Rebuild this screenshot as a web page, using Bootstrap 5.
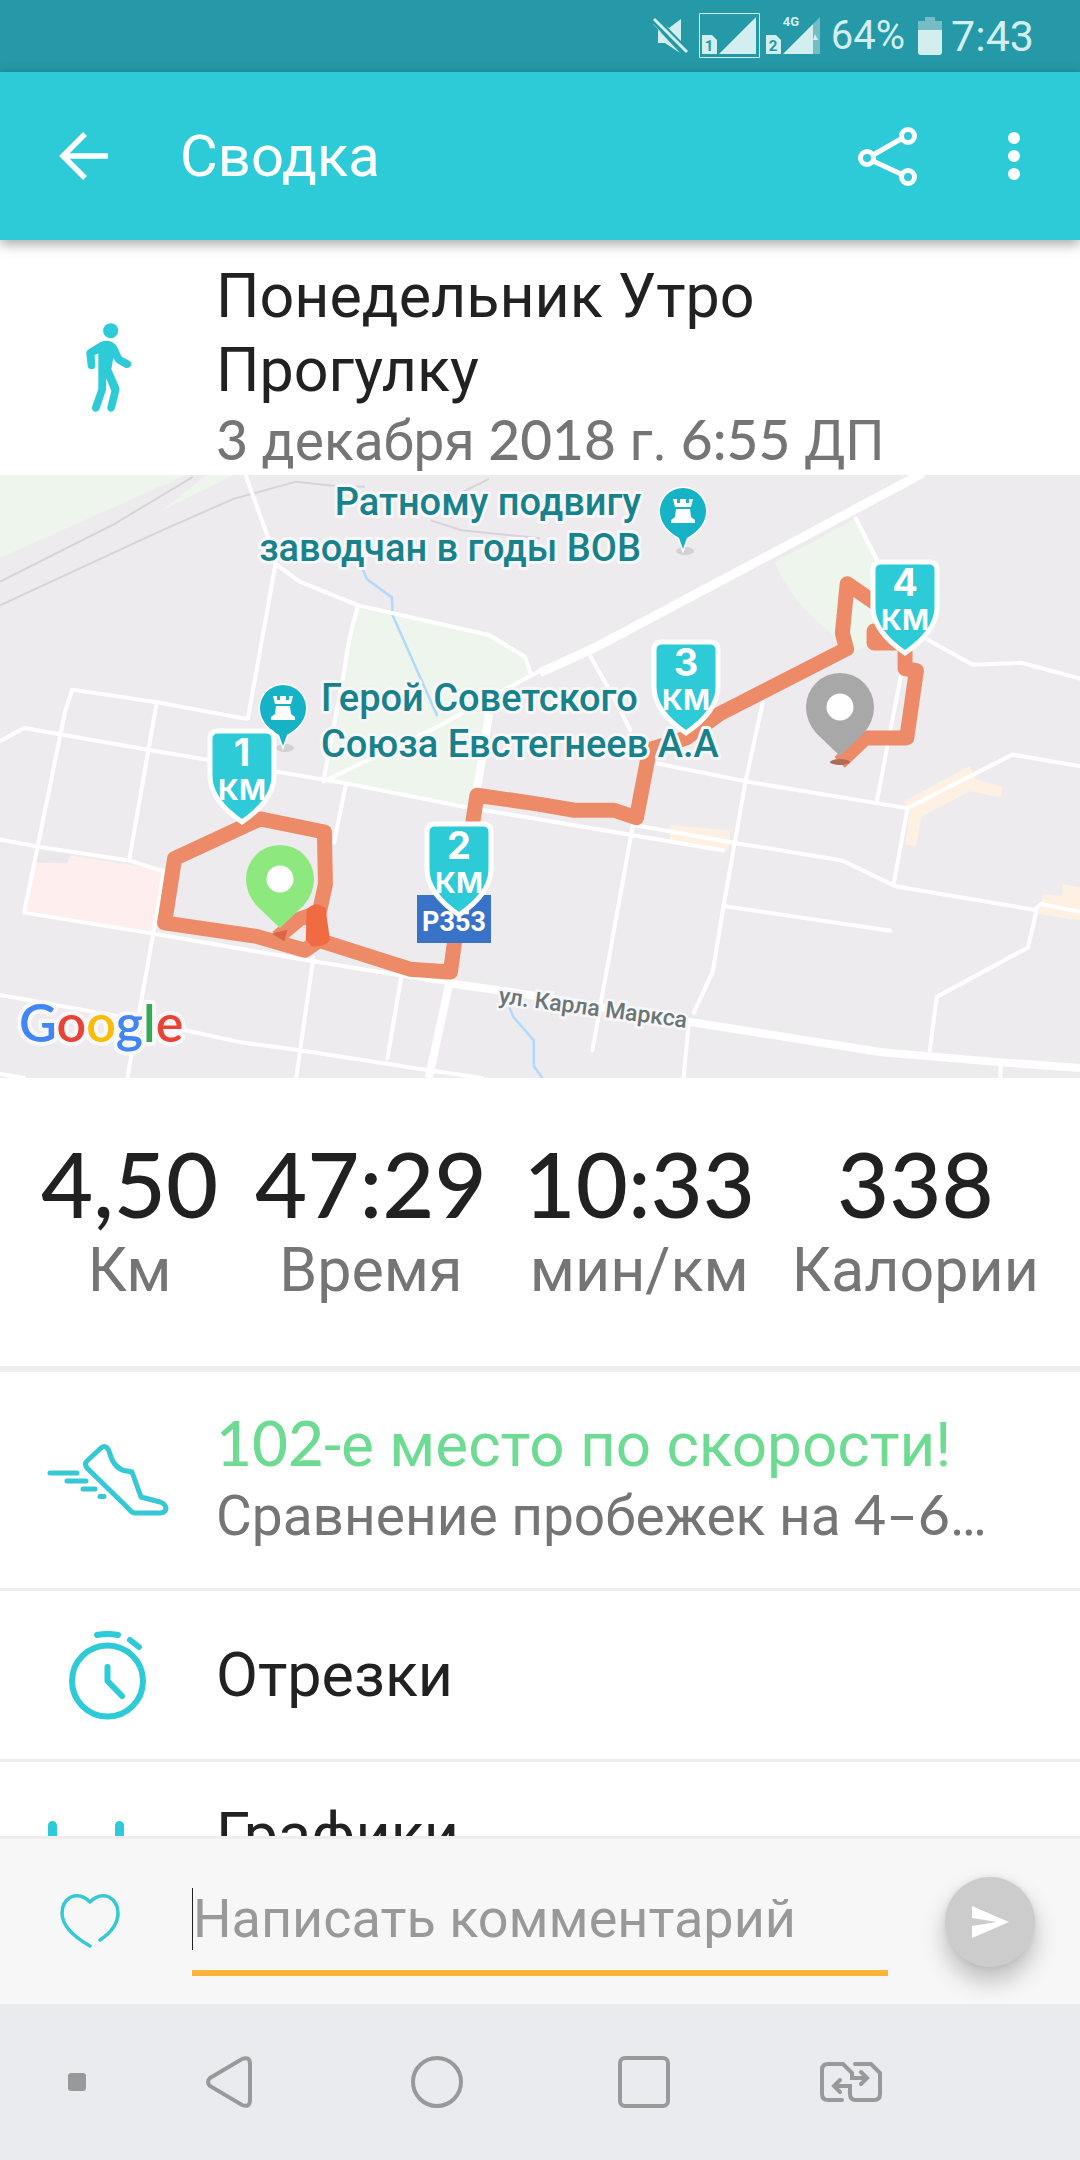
<!DOCTYPE html>
<html lang="ru">
<head>
<meta charset="utf-8">
<meta name="viewport" content="width=device-width, initial-scale=1">
<title>Сводка</title>
<link href="https://cdn.jsdelivr.net/npm/bootstrap@5.3.0/dist/css/bootstrap.min.css" rel="stylesheet">
<script src="https://cdn.jsdelivr.net/npm/bootstrap@5.3.0/dist/js/bootstrap.bundle.min.js"></script>
<style>
  :root { --teal: #2dcad7; --rule: #eeeeee; }
  body { font-family: Roboto, "Liberation Sans", sans-serif; color: #212121; background: #fff; }
  svg { display: block; flex: none; }
  button { border: 0; background: none; padding: 0; }
  .num { font-family: Lato, Roboto, sans-serif; font-weight: 500; line-height: 1; }

  .status-strip { background: #2599a7; color: #d3eeee; height: 72px; padding-right: 46px; flex: none; }
  .battery-pct { font-size: 40px; line-height: 48px; margin-left: 10px; }
  .clock-text { font-size: 43px; line-height: 48px; margin-left: 9px; }
  .battery-icon { margin-left: 13px; }

  .app-bar { background: var(--teal); color: #fff; height: 168px; padding: 0 55px 0 56px; flex: none;
             box-shadow: 0 4px 12px rgba(0,0,0,.35); z-index: 2; }
  .app-bar h1 { font-size: 58px; line-height: 72px; font-weight: 400; margin-left: 69px; }
  .app-bar .menu-btn { margin-left: 85px; }

  .icon-col { width: 216px; flex: none; }
  .line-lg { font-size: 61px; line-height: 74px; font-weight: 400; margin: 0; }
  .line-md { font-size: 55px; line-height: 68px; color: #757575; margin: 0; }
  .trip-head { padding-top: 19px; }
  .trip-head .line-lg { padding-right: 240px; }
  .trip-map { background: #edebee; }
  .trip-map svg { width: 100%; height: auto; }
  .poi { font: 500 38px Roboto, sans-serif; fill: #18828c; stroke: #f7f6f8; stroke-width: 6px; paint-order: stroke; stroke-linejoin: round; }
  .flag-text { font-family: Inter, Roboto, sans-serif; fill: #fff; text-anchor: middle; }
  .road path { vector-effect: non-scaling-stroke; }

  .totals { padding: 55px 41px 59px; border-bottom: 6px solid var(--rule); }
  .total-value { font-size: 90px; line-height: 100px; }
  .total-label { font-size: 61px; line-height: 74px; color: #757575; }

  .detail-row { border-bottom: 3px solid var(--rule); color: inherit; text-decoration: none; }
  .row-tall { padding: 36px 0 38px; }
  .row-short { padding: 47px 0; }
  .good { color: #6ddb92; font-size: 62px; }

  .comment-bar { background: #f7f7f7; border-top: 3px solid var(--rule); height: 168px; padding: 0 45px 0 60px; flex: none; }
  .comment-bar input { min-width: 0; height: 109px; margin: 0 57px 0 72px; padding: 0 0 0 1px; border: 0;
    border-bottom: 6px solid #fdb539; border-radius: 0; outline: 0; font-size: 54px; color: #212121; caret-color: transparent;
    background: linear-gradient(#212121,#212121) left center / 1px 62px no-repeat; }
  .comment-bar input::placeholder { color: #999; opacity: 1; }
  .send-btn { width: 90px; height: 90px; background: #ccc; box-shadow: 0 14px 24px rgba(0,0,0,.24), 0 0 6px rgba(0,0,0,.08); flex: none; }

  .sys-nav { background: #e9ebee; height: 156px; flex: none; }
  .sys-nav .slot { flex: 207 1 0; }
  .sys-nav .slot-dot { flex: 98 1 0; }
  .sys-nav .slot-lead { flex: 28 1 0; }
  .sys-nav .slot-end { flex: 126 1 0; }
</style>
</head>
<body class="d-flex flex-column vh-100 overflow-hidden">

<div class="status-strip d-flex align-items-center justify-content-end">
  <svg width="168" height="48" viewBox="656 12 168 48" aria-hidden="true">
    <path d="M661 30V43H668L683 53 656 24V18L672 28 684 19V44Z" fill="#d3eeee"/>
    <path d="M655 17L692 55" stroke="#2599a7" stroke-width="8"/>
    <path d="M657 19L690 52" stroke="#d3eeee" stroke-width="3"/>
    <path d="M702.500 13.500H762.500V57.500H702.500Z" fill="none" stroke="#d3eeee"/>
    <path d="M705 35H715L720 40V54H705ZM722 54L759 17V54ZM769 35H779L784 40V54H769ZM786 54L816 24V54Z" fill="#d3eeee"/>
    <path d="M816 24L823 17V54H816Z" fill="#75bcc5"/><path d="M816 40l2-6 3 6z" fill="#d3eeee"/>
    <text x="712" y="51" font-size="15" font-weight="700" text-anchor="middle" fill="#2599a7">1</text>
    <text x="776" y="51" font-size="15" font-weight="700" text-anchor="middle" fill="#2599a7">2</text>
    <text x="794" y="26" font-size="13" font-weight="700" text-anchor="middle" fill="#d3eeee">4G</text>
  </svg>
  <span class="battery-pct">64%</span>
  <svg class="battery-icon" width="24" height="38" aria-hidden="true"><path d="M7 0H17V4H24V14H0V4H7Z" fill="#75bcc5"/><path d="M0 13H24V35Q24 38 21 38H3Q0 38 0 35Z" fill="#d3eeee"/></svg>
  <span class="clock-text">7:43</span>
</div>

<header class="app-bar position-relative d-flex align-items-center">
  <button type="button" aria-label="Назад"><svg width="55" height="56" viewBox="56 128 55 56"><path d="M108 156H65M85 134L63 156 85 178" fill="none" stroke="#fff" stroke-width="5.500"/></svg></button>
  <h1 class="mb-0">Сводка</h1>
  <button type="button" class="ms-auto" aria-label="Поделиться"><svg width="60" height="64" viewBox="858 124 60 64"><g fill="none" stroke="#fff" stroke-width="5"><path d="M873 155L901 139M873 161L901 174"/><circle cx="908" cy="136" r="6.500"/><circle cx="867" cy="158" r="6.500"/><circle cx="908" cy="177" r="6.500"/></g></svg></button>
  <button type="button" class="menu-btn" aria-label="Ещё"><svg width="22" height="56" viewBox="1003 128 22 56"><g fill="#fff"><circle cx="1014" cy="138" r="6"/><circle cx="1014" cy="156" r="6"/><circle cx="1014" cy="174" r="6"/></g></svg></button>
</header>

<main class="flex-grow-1 overflow-hidden" style="min-height:0">
  <section class="trip-head d-flex align-items-center">
    <div class="icon-col d-flex justify-content-center">
      <svg width="120" height="120" viewBox="-4 -6 360 360" aria-hidden="true">
        <circle cx="184" cy="65" r="22.500" fill="#2dcad7"/>
        <path d="M147 133L136 139 138 170Q137 180 127 181 117 181 115 172L111 133Q111 126 118 121L154 99Q174 90 192 101 201 106 206 119L217 143 240 155Q248 161 245 170 240 179 229 177L204 163Q196 157 192 146L186 181 210 236Q212 243 209 249L197 298Q193 309 183 308 173 305 174 295L186 246 171 208 170 243 151 299Q147 309 137 308 127 305 128 294L147 240V180Z" fill="#2dcad7"/>
      </svg>
    </div>
    <div class="flex-grow-1">
      <h2 class="line-lg">Понедельник Утро Прогулку</h2>
      <p class="line-md"><span class="num">3</span> декабря <span class="num">2018</span> г. <span class="num">6:55</span> ДП</p>
    </div>
  </section>

  <section class="trip-map" aria-label="Карта маршрута">
    <svg viewBox="0 476 1080 603" role="img" aria-label="Маршрут прогулки">
      <defs>
        <g id="flag"><path d="M-24 3H24Q32 3 32 11V48Q32 72 0 94Q-32 72 -32 48V11Q-32 3 -24 3Z" fill="#2dcad7" stroke="#fff" stroke-width="5"/></g>
        <g id="rook">
          <ellipse cx="2" cy="40" rx="9" ry="4" fill="#d3d1d5"/>
          <path d="M0 38L-4 27Q-23 16 -23 0A23 23 0 0 1 23 0Q23 16 4 27Z" fill="#16b2c6" stroke="#fff" stroke-width="3" paint-order="stroke"/>
          <path d="M-10 -12H-6V-8H-3V-12H3V-8H6V-12H10L8 -4H-8ZM-7 -2H7L8 6 12 9V12H-12V9L-8 6Z" fill="#fff"/>
        </g>
        <g id="drop"><path d="M0 83L-24 60Q-34 48 -34 34A34 34 0 0 1 34 34Q34 48 24 60Z"/><circle cy="34" r="13.500" fill="#fff"/></g>
      </defs>
      <g class="road" transform="translate(0 470) scale(.34439 .39541)">
        <path fill="#edf5ed" d="M0 15H540L0 225ZM600 15L680 15 470 105ZM1035 350L1420 420 1525 475 1540 515 1405 640 1370 855 940 790 1000 510ZM2250 235L2485 125 2560 240 2620 420 2480 460Q2290 340 2250 235Z"/>
        <path fill="#ffeeee" d="M110 965L475 1015 450 1170 70 1122Z"/><path fill="#eae7ea" d="M110 965L205 975 195 998 105 995Z"/>
        <g fill="#fef1e3"><path d="M2625 840L2815 752 2835 785 2912 805 2905 830 2815 815 2675 880 2660 955 2630 950 2640 865ZM1945 900L2120 915 2115 965 1945 945ZM3030 1075L3085 1080V1050L3136 1058V1142L3015 1125Z"/></g>
        <g fill="none" stroke="#d5d4da" stroke-width="2"><path d="M0 285L330 140 560 20M0 345L470 155 680 75 860 32 960 42 1060 45M1250 130L1340 155 1568 175M1340 60L1420 25"/></g>
        <g fill="none" stroke="#b0dafb" stroke-width="2.500"><path d="M1040 225L1065 278 1138 325 1140 370 1270 625M1470 1340L1490 1385 1550 1445V1510L1575 1540"/></g>
        <g fill="none" stroke="#fff" stroke-width="4" stroke-linejoin="round" stroke-linecap="round">
          <path d="M715 20L775 165 800 240 870 285 1040 345 1420 420 1525 475 1540 515M800 240L720 630M1040 345Q1010 430 1000 510L940 785M70 1122L190 610 210 558 455 590 715 632M0 688L70 655 430 710 620 738M800 765L1005 795 1350 855 1560 885 2100 965M455 590L375 990M0 937L110 955 375 990 475 1018M70 1122L445 1175 910 1245 1300 1300M475 1018L445 1175 370 1540M1005 795L970 945M910 1235L860 1540M1165 1285L1125 1490M0 1330L380 1390M540 1420L700 1450 870 1470 1240 1520 1400 1540M0 1530L70 1540M940 790L1275 650 1420 580 1568 510"/>
          <path d="M1715 475L1790 590 1830 660M2485 125L2555 245M2690 430L2825 495 2965 490 3136 530M2215 590L2165 790 2100 1110 2070 1270 2015 1375M1910 745L2165 790 2545 845 2635 858 2940 722 3136 752M2620 505L2545 845M1838 900L2130 945 2445 990 2600 1055 3005 1115 3022 1100 3136 1120M1838 900L1720 1470M2635 858L2595 1050M2100 1105L2585 1168M3010 1115L2985 1210 2720 1335 2700 1470M2000 1400L1985 1540M2905 1510V1540"/>
        </g>
        <g fill="none" stroke="#fff" stroke-linejoin="round">
          <path stroke-width="9" d="M1568 515L1720 455 2240 215 2680 10"/><path stroke-width="8" d="M1300 1300L1500 1325 1980 1395 2560 1475 2900 1500 3136 1515M1305 1300L1245 1540"/><path stroke-width="8" d="M1420 620L1385 810"/>
        </g>
        <g fill="none" stroke="#ed8a68" stroke-width="15" stroke-linejoin="round">
          <path d="M805 1185L870 1138 930 1120M930 1190L885 1217 745 1182 478 1148 507 985 755 885 942 918 945 1050 925 1130 920 1190 1190 1265 1308 1272 1330 1130 1385 825 1568 848 1668 863 1783 863 1848 882 1886 710 1993 680 2088 620 2458 455 2446 415 2460 290 2568 355 2640 410 2538 410V440H2628V505L2661 510 2633 680H2513L2438 742"/>
        </g>
        <path d="M890 1115Q915 1090 945 1110L958 1190Q945 1210 905 1207L888 1190Z" fill="#f06a42"/><path d="M790 1175L835 1165 825 1195Z" fill="#d96646"/>
      </g>
      <text class="poi" x="641" y="516" text-anchor="end">Ратному подвигу</text>
      <text class="poi" x="641" y="562" text-anchor="end">заводчан в годы ВОВ</text>
      <text class="poi" x="321" y="712">Герой Советского</text>
      <text class="poi" x="321" y="758">Союза Евстегнеев А.А</text>
      <use href="#rook" x="683" y="512"/><use href="#rook" x="283" y="709"/>
      <ellipse cx="840" cy="763" rx="10" ry="3" fill="#b36a55"/>
      <use href="#drop" x="280" y="846" fill="#8de87e"/><use href="#drop" x="840" y="674" fill="#a8a8a8"/>
      <path d="M417 896H491V944H417Z" fill="#3873c8"/>
      <text x="454" y="932" font-size="27" font-weight="700" text-anchor="middle" fill="#fff">Р353</text>
      <use href="#flag" x="242" y="729"/><use href="#flag" x="459" y="822"/><use href="#flag" x="686" y="640"/><use href="#flag" x="905" y="560"/>
      <g class="flag-text" font-size="38" font-weight="700"><text x="242" y="767">1</text><text x="459" y="860">2</text><text x="686" y="677">3</text><text x="905" y="597">4</text></g>
      <g class="flag-text" font-size="29" font-weight="700"><text x="242" y="801">КМ</text><text x="459" y="894">КМ</text><text x="686" y="711">КМ</text><text x="905" y="631">КМ</text></g>
      <text transform="translate(498 1004) rotate(7.500)" font-size="23" font-weight="500" fill="#6b7577" stroke="#f7f6f8" stroke-width="5" paint-order="stroke">ул. Карла Маркса</text>
      <text x="19" y="1043" font-family="Lato" font-size="52" font-weight="600" stroke="#f8f7f9" stroke-width="8" stroke-linejoin="round" paint-order="stroke"><tspan fill="#4285f4">G</tspan><tspan fill="#ea4335">o</tspan><tspan fill="#fbbc05">o</tspan><tspan fill="#4285f4">g</tspan><tspan fill="#34a853">l</tspan><tspan fill="#ea4335">e</tspan></text>
    </svg>
  </section>

  <section class="totals d-flex justify-content-between text-center">
    <div><div class="total-value num">4,50</div><div class="total-label">Км</div></div>
    <div><div class="total-value num">47:29</div><div class="total-label">Время</div></div>
    <div><div class="total-value num">10:33</div><div class="total-label">мин/км</div></div>
    <div><div class="total-value num">338</div><div class="total-label">Калории</div></div>
  </section>

  <a href="#rank" class="detail-row row-tall d-flex align-items-center">
    <span class="icon-col d-flex justify-content-center">
      <svg width="122" height="76" viewBox="47 1443 122 76" aria-hidden="true"><g fill="none" stroke="#35c8d5" stroke-width="5" stroke-linecap="round" stroke-linejoin="round"><path d="M87 1463L101 1450Q106 1446 109 1453 114 1472 127 1473L132 1474 141 1499 160 1504Q166 1506 166 1511 165 1515 160 1515H135Q132 1515 129 1511L87 1470Q84 1466 87 1463Z"/><path d="M50 1475H77M67 1483H86M83 1491H95M100 1498.500H104"/></g></svg>
    </span>
    <span class="flex-grow-1">
      <span class="line-lg d-block good"><span class="num">102</span>-е место по скорости!</span>
      <span class="line-md d-block">Сравнение пробежек на <span class="num">4–6</span>…</span>
    </span>
  </a>
  <a href="#splits" class="detail-row row-short d-flex align-items-center">
    <span class="icon-col d-flex justify-content-center">
      <svg width="80" height="92" viewBox="68 1630 80 92" style="margin:-9px 0" aria-hidden="true"><g fill="none" stroke="#2dcad7" stroke-width="6" stroke-linecap="round" stroke-linejoin="round"><circle cx="107.500" cy="1682" r="35.500"/><path d="M107.500 1668V1682L122 1697M97 1636Q107 1634 118 1636M130 1641L139 1648"/></g></svg>
    </span>
    <span class="line-lg">Отрезки</span>
  </a>
  <a href="#charts" class="detail-row row-tall d-flex align-items-center">
    <span class="icon-col d-flex justify-content-center">
      <svg width="120" height="96" aria-hidden="true"><path d="M4.500 4.500V91.500H115.500M71.500 4.500V66M38 40V66M104 40V66" fill="none" stroke="#2dcad7" stroke-width="9" stroke-linecap="round"/></svg>
    </span>
    <span class="flex-grow-1"><span class="line-lg d-block">Графики</span><span class="line-md d-block">&nbsp;</span></span>
  </a>
</main>

<form class="comment-bar d-flex align-items-center" onsubmit="return false">
  <button type="button" aria-label="Нравится"><svg width="60" height="56" viewBox="60 1895 60 56"><path d="M90 1903Q81 1894 71 1898 62 1903 62 1914 62 1931 90 1947M90 1903Q99 1894 109 1898 118 1903 118 1914 118 1929 100 1941" fill="none" stroke="#35c8d5" stroke-width="3.500" stroke-linecap="round"/></svg></button>
  <input class="flex-grow-1" type="text" placeholder="Написать комментарий" aria-label="Написать комментарий">
  <button type="submit" class="send-btn rounded-circle d-flex align-items-center justify-content-center" aria-label="Отправить"><svg width="38" height="32"><path d="M1 0L38 16 1 32V20L26 16 1 12Z" fill="#fff"/></svg></button>
</form>

<nav class="sys-nav d-flex align-items-center" aria-label="Система">
  <span class="slot-lead"></span>
  <button type="button" class="slot-dot d-flex justify-content-center" aria-label="Скрыть"><svg width="18" height="18"><rect width="18" height="18" rx="3" fill="#98999b"/></svg></button>
  <button type="button" class="slot d-flex justify-content-center" aria-label="Назад"><svg width="48" height="54"><path d="M4 23L36 4Q44 1 44 9V45Q44 53 36 50L4 31Q0 27 4 23Z" fill="none" stroke="#98999b" stroke-width="4"/></svg></button>
  <button type="button" class="slot d-flex justify-content-center" aria-label="Домой"><svg width="54" height="54"><circle cx="27" cy="27" r="24" fill="none" stroke="#98999b" stroke-width="4"/></svg></button>
  <button type="button" class="slot d-flex justify-content-center" aria-label="Недавние"><svg width="54" height="54"><rect x="3" y="3" width="48" height="48" rx="5" fill="none" stroke="#98999b" stroke-width="4"/></svg></button>
  <button type="button" class="slot d-flex justify-content-center" aria-label="Сменить SIM"><svg width="64" height="42" viewBox="819 2061 64 42"><path d="M842 2100H828Q822 2100 822 2094V2070Q822 2064 828 2064H843L852 2073V2078H866M861 2072L867 2078 861 2084M855 2064H871L880 2073V2094Q880 2100 874 2100H856Q850 2100 850 2094V2086H835M840 2080L834 2086 840 2092" fill="none" stroke="#98999b" stroke-width="4" stroke-linecap="round"/></svg></button>
  <span class="slot-end"></span>
</nav>
</body>
</html>
